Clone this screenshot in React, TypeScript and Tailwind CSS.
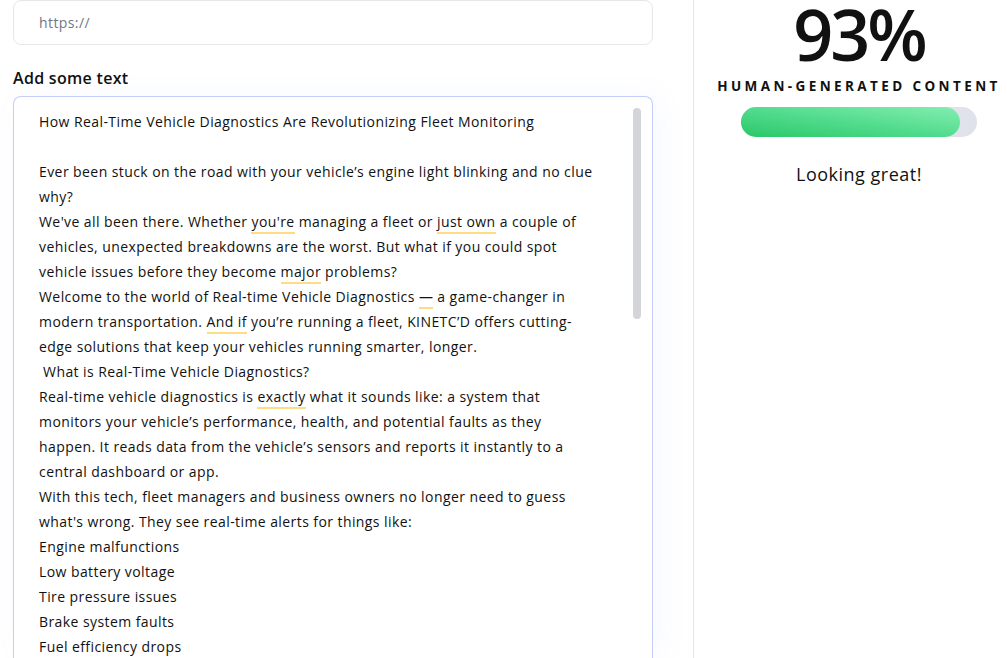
import type { ReactNode } from 'react'

// Each visual line of the draft, with the flagged words marked.
type Piece = string | { mark: string }

const LINES: Piece[][] = [
  ['How Real-Time Vehicle Diagnostics Are Revolutionizing Fleet Monitoring'],
  [''],
  ['Ever been stuck on the road with your vehicle\u2019s engine light blinking and no clue'],
  ['why?'],
  ["We've all been there. Whether ", { mark: "you're" }, ' managing a fleet or ', { mark: 'just own' }, ' a couple of'],
  ['vehicles, unexpected breakdowns are the worst. But what if you could spot'],
  ['vehicle issues before they become ', { mark: 'major' }, ' problems?'],
  ['Welcome to the world of Real-time Vehicle Diagnostics ', { mark: '\u2014' }, ' a game-changer in'],
  ['modern transportation. ', { mark: 'And if' }, ' you\u2019re running a fleet, KINETC\u2019D offers cutting-'],
  ['edge solutions that keep your vehicles running smarter, longer.'],
  ['\u00a0What is Real-Time Vehicle Diagnostics?'],
  ['Real-time vehicle diagnostics is ', { mark: 'exactly' }, ' what it sounds like: a system that'],
  ['monitors your vehicle\u2019s performance, health, and potential faults as they'],
  ['happen. It reads data from the vehicle\u2019s sensors and reports it instantly to a'],
  ['central dashboard or app.'],
  ['With this tech, fleet managers and business owners no longer need to guess'],
  ["what's wrong. They see real-time alerts for things like:"],
  ['Engine malfunctions'],
  ['Low battery voltage'],
  ['Tire pressure issues'],
  ['Brake system faults'],
  ['Fuel efficiency drops'],
]

function Line({ pieces }: { pieces: Piece[] }) {
  const out: ReactNode[] = pieces.map((p, i) =>
    typeof p === 'string' ? (
      <span key={i}>{p}</span>
    ) : (
      <span key={i} className="border-b-2 border-[#fddc84] pb-px">
        {p.mark}
      </span>
    ),
  )
  return <div className="h-[25px] whitespace-pre leading-[25px]">{out}</div>
}

function ScoreBar({ value }: { value: number }) {
  return (
    <div className="h-[30px] w-[236px] rounded-full bg-gradient-to-r from-[#eef0f5] to-[#dfe2ea]">
      <div
        className="h-full rounded-full bg-gradient-to-tr from-[#27c768] via-[#52dc8e] to-[#82eeb0]"
        style={{ width: `${value}%` }}
      />
    </div>
  )
}

export default function App() {
  return (
    <div
      className="flex h-[658px] w-[1007px] overflow-hidden bg-white text-[#111111]"
      style={{ fontFamily: '"Open Sans", "Noto Sans", sans-serif' }}
    >
      <div className="flex w-[693px] shrink-0 flex-col pl-[13px] pr-[40px]">
        <div className="flex h-[45px] shrink-0 items-center rounded-lg border border-[#e5e7eb] px-[25px] text-[14px] tracking-[0.4px] text-[#707784]">
          https://
        </div>
        <div className="mt-[24px] shrink-0 text-[16px] font-semibold leading-[18px] tracking-[0.3px]">
          Add some text
        </div>
        <div className="relative mt-[9px] flex-1 rounded-t-lg border border-b-0 border-[#c5cdfb] pl-[25px] pt-[12px] text-[14px] tracking-[0.42px] shadow-[8px_0_30px_rgba(120,140,255,0.05)]">
          {LINES.map((l, i) => (
            <Line key={i} pieces={l} />
          ))}
          <div className="absolute right-[11px] top-[11px] h-[211px] w-[8px] rounded-full bg-[#d4d5da]" />
        </div>
      </div>

      <div className="flex flex-1 flex-col items-center border-l border-[#e6e7ec] pl-[17px]">
        <div className="mt-[-2px] text-[70px] font-semibold leading-[72px] tracking-[-3px]">93%</div>
        <div className="mt-[7px] whitespace-nowrap text-[13.5px] font-bold leading-[18px] tracking-[3.4px]">
          HUMAN-GENERATED CONTENT
        </div>
        <div className="mt-[12px]">
          <ScoreBar value={93} />
        </div>
        <div className="mt-[25px] text-[18px] leading-[24px] tracking-[0.5px]">Looking great!</div>
      </div>
    </div>
  )
}
